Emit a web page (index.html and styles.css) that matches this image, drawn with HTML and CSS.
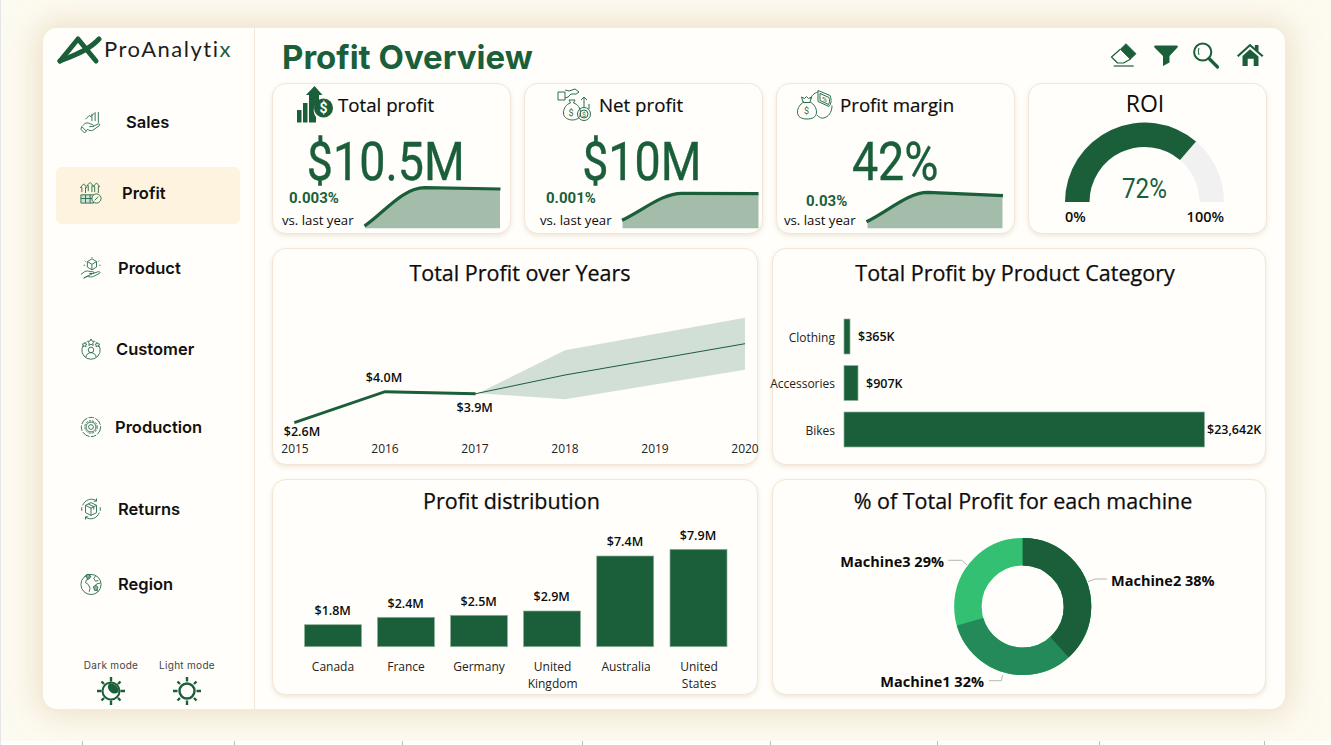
FILE: index.html
```html
<!DOCTYPE html>
<html lang="en">
<head>
    <meta charset="UTF-8">
    <meta name="viewport" content="width=device-width, initial-scale=1.0">
    <title>Profit Overview</title>
    <link rel="stylesheet" href="styles.css">
</head>
<body>
    <div class="page">
        <div class="panel">
            <aside class="sidebar">
                <div class="logo">
                    <svg class="logo-mark" viewBox="56 33 46 31" width="46" height="31">
                        <path d="M60 60 L78 38 L96 60" fill="none" stroke="#1a5e3a" stroke-width="5" stroke-linecap="round" stroke-linejoin="round"/>
                        <path d="M60 60 C72 55 88 50 99 38" fill="none" stroke="#1a5e3a" stroke-width="5" stroke-linecap="round"/>
                    </svg>
                    <span class="logo-text">ProAnalyti<span class="logo-x">x</span></span>
                </div>
                <nav class="nav">
                    <div class="nav-item nav-sales">
                        <svg class="nav-icon" viewBox="0 0 24 24" width="24" height="24">
                            <path d="M13 3v8M16.500 1.500v9.500M20 1v12M6 9l4-4 2 1 4-4M3 16c2-3 5-4 8-2l3 1c1 .5 1 2-.5 2H10m4 0 6-3c1.500-.5 2 1 1 2l-7 5c-2 1-4 0-6-1l-2 2" fill="none" stroke="#2a6e4b" stroke-width="1"/>
                            <path d="M2 17l5 5-2 2-4-4z" fill="none" stroke="#2a6e4b" stroke-width="1"/>
                        </svg>
                        <span>Sales</span>
                    </div>
                    <div class="nav-item nav-profit">
                        <svg class="nav-icon" viewBox="0 0 24 24" width="24" height="24">
                            <path d="M1 14h14v9H1zM1 18h14M6 14v9M11 14v9" fill="#cfe0d4" stroke="#2a6e4b" stroke-width="1"/>
                            <path d="M2 11V6H0.500L4 2l3.500 4H6v6M9 10V4H7.500L11 0.500 14.500 4H13v7M16 11V5h-1.500L18 1l3.500 4H20v7" fill="none" stroke="#2a6e4b" stroke-width="1"/>
                            <circle cx="18" cy="18" r="5" fill="#fef3df" stroke="#2a6e4b" stroke-width="1"/>
                            <path d="M16 20l4-4" stroke="#2a6e4b" stroke-width="1"/>
                        </svg>
                        <span>Profit</span>
                    </div>
                    <div class="nav-item nav-product">
                        <svg class="nav-icon" viewBox="0 0 24 24" width="24" height="24">
                            <path d="M8 5l5-3 5 3v6l-5 3-5-3zM8 5l5 3 5-3M13 8v6" fill="none" stroke="#2a6e4b" stroke-width="1"/>
                            <path d="M5 4l1 1M21 4l-1 1M13 0v1M4 9h1.500M21 9h1.500" stroke="#2a6e4b" stroke-width="1"/>
                            <path d="M1 19l4-3c2-1 4-1 6 0h3c1.500 0 1.500 2 0 2h-4m4 0 6-2c1.500-.5 2.500 1 1 2l-6 3c-2 1-5 1-7 0l-2 1-2 1z" fill="none" stroke="#2a6e4b" stroke-width="1"/>
                        </svg>
                        <span>Product</span>
                    </div>
                    <div class="nav-item nav-customer">
                        <svg class="nav-icon" viewBox="0 0 24 24" width="24" height="24">
                            <path d="M7 4.500a10 10 0 1 0 10 0" fill="none" stroke="#2a6e4b" stroke-width="1"/>
                            <path d="M12 1l1.200 2.400 2.600.3-1.900 1.800.5 2.600L12 6.900 9.600 8.100l.5-2.600L8.200 3.700l2.600-.3zM5 5l.8 1.500 1.700.2-1.200 1.200.3 1.700L5 8.800l-1.600.8.300-1.700-1.200-1.200 1.700-.2zM19 5l.8 1.500 1.700.2-1.200 1.200.3 1.700-1.600-.8-1.600.8.3-1.700-1.200-1.200 1.700-.2z" fill="#fffefa" stroke="#2a6e4b" stroke-width=".9"/>
                            <circle cx="12" cy="13" r="3" fill="none" stroke="#2a6e4b" stroke-width="1"/>
                            <path d="M6.500 21c0-3 2.500-5 5.500-5s5.500 2 5.500 5" fill="none" stroke="#2a6e4b" stroke-width="1"/>
                        </svg>
                        <span>Customer</span>
                    </div>
                    <div class="nav-item nav-production">
                        <svg class="nav-icon" viewBox="0 0 24 24" width="24" height="24">
                            <circle cx="12" cy="12" r="10.500" fill="none" stroke="#2a6e4b" stroke-width="1.200" stroke-dasharray="9 1.500 6 1.500"/>
                            <circle cx="12" cy="12" r="6.800" fill="none" stroke="#2a6e4b" stroke-width="1.600" stroke-dasharray="2.400 1.200"/>
                            <circle cx="12" cy="12" r="5.400" fill="none" stroke="#2a6e4b" stroke-width=".8"/>
                            <circle cx="12" cy="12" r="2.600" fill="none" stroke="#2a6e4b" stroke-width="1"/>
                        </svg>
                        <span>Production</span>
                    </div>
                    <div class="nav-item nav-returns">
                        <svg class="nav-icon" viewBox="0 0 24 24" width="24" height="24">
                            <path d="M3 8a10 10 0 0 1 15-5M21 16a10 10 0 0 1-15 5M18 0.500V3.500h-3M6 23.500V20.500h3" fill="none" stroke="#2a6e4b" stroke-width="1"/>
                            <path d="M2 14a10 10 0 0 1 0-4M22 10a10 10 0 0 1 0 4" fill="none" stroke="#2a6e4b" stroke-width="1"/>
                            <path d="M6 8l6-3 6 3v8l-6 3-6-3zM6 8l6 3 6-3M12 11v8M9 6.500l6 3v3" fill="none" stroke="#2a6e4b" stroke-width="1"/>
                        </svg>
                        <span>Returns</span>
                    </div>
                    <div class="nav-item nav-region">
                        <svg class="nav-icon" viewBox="0 0 24 24" width="24" height="24">
                            <circle cx="12" cy="12.500" r="11" fill="none" stroke="#2a6e4b" stroke-width="1"/>
                            <path d="M5 4l3-2.500 4 2-2 3-3 1-1 3 3 2 2 4-1 4M17 3l-2 3 2 3 3-1M22 11l-4 1-2 3 2 4 2 1" fill="none" stroke="#2a6e4b" stroke-width="1"/>
                            <path d="M6.500 2.500l3-1 1.500 2.500-3 2.500zM14.500 15l3-1.500 2 2-1 3.500-2.500 0z" fill="#8fb29c" stroke="#2a6e4b" stroke-width=".7"/>
                        </svg>
                        <span>Region</span>
                    </div>
                </nav>
                <div class="modes">
                    <div class="mode">
                        <span class="mode-label">Dark mode</span>
                        <svg viewBox="0 0 30 30" width="30" height="30">
                            <circle cx="15" cy="15" r="8.500" fill="none" stroke="#1a5e3a" stroke-width="2"/>
                            <path d="M13 7.500a8 8 0 0 1 9.500 8.500 6.500 6.500 0 0 1-9.500-8.500z" fill="#1a5e3a"/>
                            <path d="M15 1v4.500M15 24.500V29M1 15h4.500M24.500 15H29M5.500 5.500l2.500 2.500M22 22l2.500 2.500M24.500 5.500L22 8M8 22l-2.500 2.500" stroke="#1a5e3a" stroke-width="2.400"/>
                        </svg>
                    </div>
                    <div class="mode">
                        <span class="mode-label">Light mode</span>
                        <svg viewBox="0 0 30 30" width="30" height="30">
                            <circle cx="15" cy="15" r="7.500" fill="none" stroke="#1a5e3a" stroke-width="2.400"/>
                            <path d="M15 1v4.500M15 24.500V29M1 15h4.500M24.500 15H29M5.500 5.500l2.500 2.500M22 22l2.500 2.500M24.500 5.500L22 8M8 22l-2.500 2.500" stroke="#1a5e3a" stroke-width="2.400"/>
                        </svg>
                    </div>
                </div>
            </aside>

            <main class="main">
                <header class="topbar">
                    <h1 class="page-title">Profit Overview</h1>
                    <svg class="toolbar" viewBox="1108 44 158 30" width="158" height="30">
                        <path d="M1125 46.700 L1135 56.700 L1129.300 62.300 L1119.300 52.300z" fill="#1a5e3a" stroke="#1a5e3a" stroke-width=".8" stroke-linejoin="round"/>
                        <path d="M1119.300 52.300 L1110.500 60 L1116.500 66 H1122.500 L1129.300 62.300" fill="none" stroke="#1a5e3a" stroke-width="1.200" stroke-linejoin="round"/>
                        <path d="M1112.700 69 H1132.700" stroke="#1a5e3a" stroke-width="1.200"/>
                        <path d="M1154 48.500 H1176 Q1177.500 49 1176.500 50.500 L1168.500 59 V65.500 L1162 69 V59 L1153.500 50.500 Q1152.500 49 1154 48.500z" fill="#1a5e3a"/>
                        <circle cx="1201.700" cy="55" r="8.600" fill="none" stroke="#1a5e3a" stroke-width="2"/>
                        <path d="M1208 61.500 L1216.500 70" stroke="#1a5e3a" stroke-width="3.200" stroke-linecap="round"/>
                        <path d="M1198 51 Q1196.500 54 1198 58" fill="none" stroke="#1a5e3a" stroke-width="1"/>
                        <path d="M1236 58.500 L1249 46.800 L1253.800 51 V48 H1257.500 V54.300 L1262.500 58.500 L1261 60 L1249 49.500 L1237.500 60z" fill="#1a5e3a"/>
                        <path d="M1241.500 59 L1249 52.300 L1257.500 59.500 V69 H1252.700 V61.800 H1246.700 V69 H1241.500z" fill="#1a5e3a"/>
                    </svg>
                </header>

                <section class="kpis">
                    <div class="card kpi kpi-total">
                        <div class="kpi-head">
                            <svg viewBox="296 86 38 37" width="38" height="37">
                                <path d="M297 110h4.500v12.500H297zM303 103h4.500v19.500H303zM309 95h-3l8.500-9 8 9H319v6a11 11 0 0 0-3 16v5.500h-7z" fill="#1a5e3a"/>
                                <circle cx="323.500" cy="108" r="9.500" fill="#1a5e3a"/>
                                <text x="323.500" y="113" class="coin">$</text>
                            </svg>
                            <span class="kpi-title">Total profit</span>
                        </div>
                        <div class="kpi-value"><span>$10.5M</span></div>
                        <div class="kpi-foot">
                            <div class="kpi-delta">
                                <div class="delta-num">0.003%</div>
                                <div class="delta-note">vs. last year</div>
                            </div>
                            <svg class="spark" viewBox="363 184 139 45" width="139" height="45">
                                <path d="M365 228.300 V225.700 C385 212 402 188 425 187.700 L500 189 V228.300z" fill="#a3bdaa"/>
                                <path d="M364.500 226 C385 212 402 188 425 187.700 L500.500 189" fill="none" stroke="#1a5e3a" stroke-width="3.200"/>
                            </svg>
                        </div>
                    </div>

                    <div class="card kpi kpi-net">
                        <div class="kpi-head">
                            <svg viewBox="557 88 34 34" width="34" height="34">
                                <g fill="none" stroke="#2a6e4b" stroke-width="1">
                                    <path d="M558 92h7v8h-7zM565 90l4 1 6-2 4 3-3 2h-5l-3 3-3 1"/>
                                    <path d="M569 100h6l-1.500 3c4 1 7 5 7 10 0 5-4 7-8 7s-9-2-9-7c0-5 3-9 7-10z"/>
                                    <circle cx="584" cy="114" r="6.500"/>
                                    <circle cx="584" cy="114" r="4"/>
                                    <path d="M584 107v-10M581 100l3-3 3 3M589 109v-5"/>
                                </g>
                                <text x="571" y="116" class="coin-small">$</text>
                                <text x="584" y="117" class="coin-tiny">$</text>
                            </svg>
                            <span class="kpi-title">Net profit</span>
                        </div>
                        <div class="kpi-value"><span>$10M</span></div>
                        <div class="kpi-foot">
                            <div class="kpi-delta">
                                <div class="delta-num">0.001%</div>
                                <div class="delta-note">vs. last year</div>
                            </div>
                            <svg class="spark" viewBox="620 184 140 45" width="140" height="45">
                                <path d="M622.500 228.300 V220 C645 209 662 193.500 682 193.300 L758.500 193.700 V228.300z" fill="#a3bdaa"/>
                                <path d="M622 220.300 C645 209 662 193.500 682 193.300 L758.500 193.700" fill="none" stroke="#1a5e3a" stroke-width="3.200"/>
                            </svg>
                        </div>
                    </div>

                    <div class="card kpi kpi-margin">
                        <div class="kpi-head">
                            <svg viewBox="795 91 38 32" width="38" height="32">
                                <g fill="none" stroke="#2a6e4b" stroke-width="1">
                                    <path d="M803 104l-1.500-5 3 1.500 2-2 2 2 3-1.500-1.500 5c4 2 6.500 6 6.500 10 0 5-4 7-9.500 7s-9.500-2-9.500-7c0-4 2.500-8 6.500-10z"/>
                                    <path d="M804 104.500h6"/>
                                    <path d="M817 117c2 2.500 5 4 8 2.500 5-2 7-7 7-12M811 101c0-3 3-6 7-7"/>
                                    <path d="M818 92.500l12 5c2 5 1 8-1 11l-11-5z"/>
                                    <path d="M820 95.500l9 4c1 3 .5 5-.5 7l-8.500-4z"/>
                                </g>
                                <text x="806.500" y="116" class="coin-small">$</text>
                                <text x="824.500" y="104" class="coin-tiny">%</text>
                            </svg>
                            <span class="kpi-title">Profit margin</span>
                        </div>
                        <div class="kpi-value"><span>42%</span></div>
                        <div class="kpi-foot">
                            <div class="kpi-delta">
                                <div class="delta-num">0.03%</div>
                                <div class="delta-note">vs. last year</div>
                            </div>
                            <svg class="spark" viewBox="865 184 140 45" width="140" height="45">
                                <path d="M867.500 228.300 V221.500 C890 210 908 192.500 928 192.300 L1002.500 195.700 V228.300z" fill="#a3bdaa"/>
                                <path d="M866.500 221.800 C890 210 908 192.500 928 192.300 L1003 195.700" fill="none" stroke="#1a5e3a" stroke-width="3.200"/>
                            </svg>
                        </div>
                    </div>

                    <div class="card kpi kpi-roi">
                        <h2 class="roi-title">ROI</h2>
                        <svg class="chart" viewBox="1029 122 237 111" width="237" height="111">
                            <path d="M1065 202 A79.500 79.500 0 0 1 1224 202 H1199.500 A55 55 0 0 0 1089.500 202z" fill="#f1f1f1"/>
                            <path d="M1065 202 A79.500 79.500 0 0 1 1196 141.500 L1180 160 A55 55 0 0 0 1089.500 202z" fill="#1a5e3a"/>
                            <text x="1122" y="198" textLength="45" lengthAdjust="spacingAndGlyphs" class="gauge-value">72%</text>
                            <text x="1065" y="222" class="gauge-end">0%</text>
                            <text x="1224" y="222" text-anchor="end" class="gauge-end">100%</text>
                        </svg>
                    </div>
                </section>

                <section class="charts">
                    <div class="card">
                        <h2 class="card-title title-years">Total Profit over Years</h2>
                        <svg class="chart" viewBox="273 295 484 169" width="484" height="169">
                            <path d="M478 393.300 L565 350.300 L745 317.700 V369.700 L565 399.300z" fill="#d2dfd6"/>
                            <path d="M475.700 393.700 L565 375 L745 343.700" fill="none" stroke="#1a5e3a" stroke-width="1"/>
                            <path d="M294.300 422.700 L385 391.700 L475.700 393.700" fill="none" stroke="#1a5e3a" stroke-width="3"/>
                            <text x="302" y="436" class="val">$2.6M</text>
                            <text x="384" y="382" class="val">$4.0M</text>
                            <text x="474.700" y="412" class="val">$3.9M</text>
                            <text x="295" y="453" class="axis">2015</text>
                            <text x="385" y="453" class="axis">2016</text>
                            <text x="475" y="453" class="axis">2017</text>
                            <text x="565" y="453" class="axis">2018</text>
                            <text x="655" y="453" class="axis">2019</text>
                            <text x="745" y="453" class="axis">2020</text>
                        </svg>
                    </div>

                    <div class="card">
                        <h2 class="card-title title-category">Total Profit by Product Category</h2>
                        <svg class="chart" viewBox="773 295 492 169" width="492" height="169">
                            <rect x="844" y="319" width="6" height="35" class="bar"/>
                            <rect x="844" y="365.500" width="14" height="35" class="bar"/>
                            <rect x="844" y="412" width="360.500" height="35" class="bar"/>
                            <text x="835" y="342" class="axis end">Clothing</text>
                            <text x="835" y="388" class="axis end">Accessories</text>
                            <text x="835" y="435" class="axis end">Bikes</text>
                            <text x="858" y="341" class="val start">$365K</text>
                            <text x="866" y="388" class="val start">$907K</text>
                            <text x="1207" y="434" class="val start">$23,642K</text>
                        </svg>
                    </div>

                    <div class="card">
                        <h2 class="card-title title-distribution">Profit distribution</h2>
                        <svg class="chart" viewBox="273 526 484 168" width="484" height="168">
                            <rect x="304.500" y="624.700" width="57" height="22" class="bar"/>
                            <rect x="377.500" y="617.300" width="57" height="29.400" class="bar"/>
                            <rect x="450.500" y="615.300" width="57" height="31.400" class="bar"/>
                            <rect x="523.500" y="611" width="57" height="35.700" class="bar"/>
                            <rect x="596.700" y="556" width="57" height="90.700" class="bar"/>
                            <rect x="670" y="549.300" width="57" height="97.400" class="bar"/>
                            <text x="332.700" y="615" class="val">$1.8M</text>
                            <text x="405.700" y="608" class="val">$2.4M</text>
                            <text x="478.700" y="606" class="val">$2.5M</text>
                            <text x="551.700" y="601" class="val">$2.9M</text>
                            <text x="625" y="546" class="val">$7.4M</text>
                            <text x="698" y="540" class="val">$7.9M</text>
                            <text x="333" y="671" class="axis">Canada</text>
                            <text x="406" y="671" class="axis">France</text>
                            <text x="479" y="671" class="axis">Germany</text>
                            <text x="552.600" y="671" class="axis">United</text>
                            <text x="552.600" y="688" class="axis">Kingdom</text>
                            <text x="626" y="671" class="axis">Australia</text>
                            <text x="699" y="671" class="axis">United</text>
                            <text x="699" y="688" class="axis">States</text>
                        </svg>
                    </div>

                    <div class="card">
                        <h2 class="card-title title-machine">% of Total Profit for each machine</h2>
                        <svg class="chart" viewBox="773 526 492 168" width="492" height="168">
                            <g transform="rotate(-90 1022.700 606.500)" fill="none" stroke-width="27.500">
                                <circle cx="1022.700" cy="606.500" r="54.800" pathLength="100" stroke="#33c072"/>
                                <circle cx="1022.700" cy="606.500" r="54.800" pathLength="100" stroke="#258a59" stroke-dasharray="70.500 100"/>
                                <circle cx="1022.700" cy="606.500" r="54.800" pathLength="100" stroke="#1a5e3a" stroke-dasharray="38.300 100"/>
                            </g>
                            <path d="M948 560.300 H961.700 L967 565M1088 581.700 L1095 579 H1107M989 680.700 H1001.500 L1002.500 675" fill="none" stroke="#b5b5b5" stroke-width="1"/>
                            <text x="944" y="567" class="pie-label end">Machine3 29%</text>
                            <text x="1111" y="586" class="pie-label start">Machine2 38%</text>
                            <text x="984" y="687" class="pie-label end">Machine1 32%</text>
                        </svg>
                    </div>
                </section>
            </main>
        </div>

        <svg class="ticks" viewBox="0 0 1331 4" width="1331" height="4">
            <path d="M82.500 0v4M234.500 0v4M402.500 0v4M582.500 0v4M770.500 0v4M937.500 0v4M1099.500 0v4M1264.500 0v4" stroke="#bdbdbd" stroke-width="1"/>
        </svg>
    </div>
</body>
</html>
```

FILE: styles.css
```css
body {
    margin: 0;
    padding: 0;
    background-color: #ffffff;
    font-family: "Open Sans", "Noto Sans", sans-serif;
    color: #0c0c0c;
}

.page {
    width: 1331px;
    height: 745px;
    box-sizing: border-box;
    display: flex;
    flex-direction: column;
    justify-content: space-between;
    padding-top: 28px;
    overflow: hidden;
    background-color: #fdfaf0;
    border-left: 1px solid #e4e6ea;
}

.panel {
    width: 1242px;
    height: 681px;
    margin-left: 42px;
    display: flex;
    background-color: #fffefa;
    border-radius: 14px;
    box-shadow: 0 0 28px 6px rgba(226, 205, 170, 0.55);
}

.ticks {
    display: block;
    margin-left: -1px;
    background-color: #ffffff;
    flex-shrink: 0;
}

/* sidebar */
.sidebar {
    width: 211px;
    flex-shrink: 0;
    display: flex;
    flex-direction: column;
    border-right: 1px solid #f3e8d8;
}

.logo {
    height: 42px;
    display: flex;
    align-items: center;
    padding-left: 13px;
    box-sizing: border-box;
    gap: 2px;
}

.logo-text {
    margin-bottom: 1px;
    font-family: Lato, sans-serif;
    font-size: 22px;
    letter-spacing: 1.500px;
    color: #1d1d1d;
}

.logo-x {
    color: #1a5e3a;
}

.nav {
    margin: 32px 14px 0 13px;
    display: flex;
    flex-direction: column;
}

.nav-item {
    height: 40px;
    display: flex;
    align-items: center;
    padding-left: 23px;
    font-family: Inter, sans-serif;
    font-size: 16.500px;
    font-weight: 600;
    color: #111111;
}

.nav-icon {
    width: 22px;
    height: 22px;
    margin: 0 1px;
}

.nav-icon path,
.nav-icon circle {
    stroke-width: 1px;
}

.nav-sales { gap: 23px; }
.nav-profit {
    gap: 19px;
    height: 57px;
    margin-top: 25px;
    padding-bottom: 5px;
    box-sizing: border-box;
    background-color: #fef3df;
    border-radius: 6px;
}
.nav-product { gap: 15px; margin-top: 24px; }
.nav-customer { gap: 13px; margin-top: 41px; }
.nav-production { gap: 12px; margin-top: 38px; }
.nav-returns { gap: 15px; margin-top: 42px; }
.nav-region { gap: 15px; margin-top: 35px; }

.modes {
    margin-top: auto;
    padding: 0 0 3px 38px;
    display: flex;
    gap: 16px;
}

.mode {
    width: 60px;
    display: flex;
    flex-direction: column;
    align-items: center;
    gap: 5px;
}

.mode-label {
    font-family: Inter, sans-serif;
    font-size: 10px;
    letter-spacing: 0.300px;
    white-space: nowrap;
    color: #444444;
}

/* main area */
.main {
    flex: 1;
    padding: 0 18px 0 17px;
}

.topbar {
    height: 55px;
    display: flex;
    align-items: center;
    justify-content: space-between;
    padding-left: 10px;
}

.page-title {
    margin: 2px 0 0;
    font-family: Inter, sans-serif;
    font-size: 33px;
    font-weight: 700;
    color: #1a5e3a;
}

.kpis {
    display: grid;
    grid-template-columns: repeat(4, 239px);
    column-gap: 13px;
    height: 151px;
}

.charts {
    display: grid;
    grid-template-columns: 486px 494px;
    grid-template-rows: 217px 216px;
    gap: 14px;
    margin-top: 14px;
}

.card {
    box-sizing: border-box;
    background-color: #fffefa;
    border: 1px solid #f3e6d6;
    border-radius: 14px;
    box-shadow: 0 2px 4px rgba(205, 180, 145, 0.3);
}

.card-title {
    height: 46px;
    margin: 0;
    line-height: 48px;
    font-size: 21.500px;
    font-weight: 500;
    text-align: center;
    -webkit-text-stroke: 0.250px #0c0c0c;
}

.title-years { padding-left: 10px; }
.title-category { padding-right: 8px; }
.title-distribution { padding-right: 7px; line-height: 42px; }
.title-machine { padding-left: 8px; line-height: 42px; }

.chart {
    display: block;
    overflow: visible;
}

/* kpi cards */
.kpi-head {
    height: 40px;
    padding-top: 1px;
    box-sizing: border-box;
    display: flex;
    align-items: center;
}

.kpi-total .kpi-head { padding-left: 23px; gap: 4px; }
.kpi-net .kpi-head { padding-left: 32px; gap: 8px; }
.kpi-margin .kpi-head { padding-left: 18px; gap: 7px; }

.kpi-title {
    font-size: 18.700px;
    font-weight: 500;
    -webkit-text-stroke: 0.200px #0c0c0c;
}

.kpi-value {
    height: 48px;
    margin-top: 12px;
    padding-top: 2px;
    box-sizing: border-box;
    line-height: 48px;
    text-align: center;
    font-family: Roboto, sans-serif;
    font-size: 53px;
    color: #1a5e3a;
    -webkit-text-stroke: 0.400px #1a5e3a;
}

.kpi-value span {
    display: inline-block;
    transform: scaleX(0.880);
}

.kpi-total .kpi-value { padding-right: 12px; }
.kpi-net .kpi-value { padding-right: 3px; }

.kpi-foot {
    height: 45px;
    display: flex;
    justify-content: space-between;
    align-items: flex-end;
}

.delta-num {
    line-height: 18px;
    font-family: Roboto, sans-serif;
    font-size: 15px;
    font-weight: 700;
    color: #1a5e3a;
    margin-bottom: 4px;
}

.delta-note {
    line-height: 18px;
    font-size: 13.200px;
    white-space: nowrap;
}

.kpi-total .kpi-delta { padding-left: 9px; }
.kpi-total .delta-num { margin-left: 7px; }
.kpi-total .spark { margin-right: 8px; }
.kpi-net .kpi-delta { padding-left: 15px; }
.kpi-net .delta-num { margin-left: 6px; }
.kpi-net .spark { margin-right: 2px; }
.kpi-margin .kpi-delta { padding-left: 7px; }
.kpi-margin .delta-num { margin-left: 22px; margin-bottom: 1px; }
.kpi-margin .spark { margin-right: 9px; }

.spark {
    display: block;
    flex-shrink: 0;
}

.roi-title {
    height: 38px;
    margin: 0;
    padding-right: 5px;
    line-height: 38px;
    font-size: 23px;
    font-weight: 500;
    text-align: center;
}

/* svg text */
.val {
    font-size: 12.500px;
    font-weight: 600;
    text-anchor: middle;
    fill: #0c0c0c;
}

.axis {
    font-size: 12px;
    text-anchor: middle;
    fill: #222222;
}

.bar {
    fill: #1a5e3a;
    stroke: #8fb29c;
    stroke-width: 0.700;
}

.pie-label {
    font-size: 14.500px;
    font-weight: 700;
    fill: #0c0c0c;
}

.end { text-anchor: end; }
.start { text-anchor: start; }

.gauge-value {
    font-family: Roboto, sans-serif;
    font-size: 28px;
    fill: #1a5e3a;
}

.gauge-end {
    font-size: 14.500px;
    font-weight: 600;
    fill: #0c0c0c;
}

.coin {
    font-family: Roboto, sans-serif;
    font-size: 14px;
    font-weight: 700;
    text-anchor: middle;
    fill: #fffefa;
}

.coin-small {
    font-family: Roboto, sans-serif;
    font-size: 9px;
    text-anchor: middle;
    fill: #2a6e4b;
}

.coin-tiny {
    font-family: Roboto, sans-serif;
    font-size: 7px;
    text-anchor: middle;
    fill: #2a6e4b;
}
```
